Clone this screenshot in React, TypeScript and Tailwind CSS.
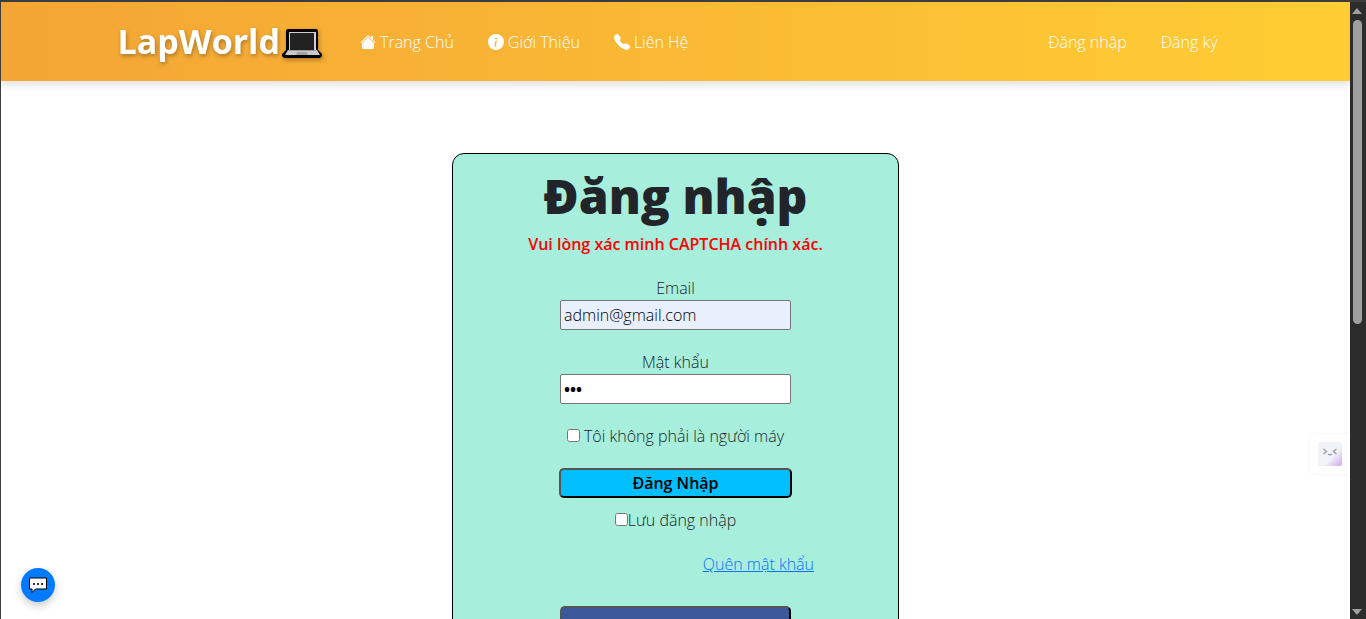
import { BsFillTelephoneFill, BsHouseFill, BsInfoCircleFill } from "react-icons/bs";
import type { ReactNode } from "react";

function LaptopIcon() {
  return (
    <svg viewBox="0 0 40 32" className="mt-1 h-8 w-10 shrink-0" aria-hidden="true">
      <path d="M6 1h28q2 0 2 2v19l4 4v2l-2 2H2l-2-2v-2l4-4V3q0-2 2-2z" fill="#000" />
      <path d="M7 4h27v18H7z" fill="#cfcfcf" />
      <path d="M8 5h24v17H8z" fill="#212121" />
      <path d="M6 22h29l3 5H3z" fill="#c9c9c9" />
      <path d="M7 22h27v1H7z" fill="#9b9b9b" />
      <path d="M15 24h10l1 3H14z" fill="#a3a3a3" />
    </svg>
  );
}

function ChatIcon() {
  return (
    <svg viewBox="0 0 18 16" className="h-4 w-[18px]" aria-hidden="true">
      <path d="M.5 1h17v11H6.5L3 15.5V12H.5z" fill="#fff" stroke="#000" />
      <path d="M4 6h2v2H4zM8 6h2v2H8zM12 6h2v2h-2z" fill="#333" />
    </svg>
  );
}

function NavLink({ icon, children }: { icon?: ReactNode; children: ReactNode }) {
  return (
    <a href="#" className="flex items-center gap-1 px-2 py-2 text-base font-light text-white">
      {icon}
      {children}
    </a>
  );
}

function Header() {
  return (
    <header className="relative bg-linear-to-r from-[#f4a535] to-[#ffcd33] shadow-[0_4px_8px_rgba(0,0,0,0.12)]">
      <nav className="mx-auto flex h-[79px] max-w-[1140px] items-center px-3">
        <a
          href="#"
          className="mr-[30px] flex items-center gap-0.5 font-['Open_Sans',sans-serif] text-[34px] font-bold text-white drop-shadow-[1px_2px_2px_rgba(0,0,0,0.3)]"
        >
          LapWorld
          <LaptopIcon />
        </a>
        <div className="flex items-center gap-[18px]">
          <NavLink icon={<BsHouseFill className="size-4" />}>Trang Chủ</NavLink>
          <NavLink icon={<BsInfoCircleFill className="size-4" />}>Giới Thiệu</NavLink>
          <NavLink icon={<BsFillTelephoneFill className="size-4" />}>Liên Hệ</NavLink>
        </div>
        <div className="mr-2 ml-auto flex items-center gap-[18px]">
          <NavLink>Đăng nhập</NavLink>
          <NavLink>Đăng ký</NavLink>
        </div>
      </nav>
    </header>
  );
}

const fieldClass =
  "h-[30px] w-full rounded-xs border border-[#767676] px-[3px] text-base text-black outline-none";

function LoginCard() {
  return (
    <form className="mx-auto mt-18 flex w-full max-w-[447px] flex-col items-center rounded-xl border border-black bg-[#a7eedc] pt-4 pb-10 font-light text-[#212529]">
      <h1 className="text-5xl leading-[52px] font-extrabold">Đăng nhập</h1>
      <p className="mt-2.5 mb-5 font-semibold text-[#ff0000]">Vui lòng xác minh CAPTCHA chính xác.</p>
      <div className="mb-5 w-[231px] text-center">
        <label htmlFor="email" className="block">Email</label>
        <input id="email" type="email" defaultValue="admin@gmail.com" className={`${fieldClass} bg-[#e8f0fe]`} />
      </div>
      <div className="mb-5 w-[231px] text-center">
        <label htmlFor="password" className="block">Mật khẩu</label>
        <input id="password" type="password" defaultValue="123" className={`${fieldClass} bg-white font-bold`} />
      </div>
      <label className="mb-5 flex items-center gap-1">
        <input type="checkbox" className="mb-0.5 size-[13px]" />
        Tôi không phải là người máy
      </label>
      <button
        type="submit"
        className="mb-2.5 flex h-[30px] w-[233px] items-center justify-center rounded-[5px] border-2 border-t-[#555] border-r-black border-b-black border-l-[#555] bg-[#00bfff] font-semibold text-black"
      >
        Đăng Nhập
      </button>
      <label className="mb-5 flex items-center">
        <input type="checkbox" className="mb-0.5 size-[13px]" />
        Lưu đăng nhập
      </label>
      <a href="#" className="mr-[84px] mb-[30px] self-end text-[#0d6efd] underline">Quên mật khẩu</a>
      <button
        type="button"
        aria-label="Facebook"
        className="h-[30px] w-[231px] rounded-[5px] border-2 border-t-[#555] border-r-black border-b-black border-l-[#555] bg-[#3b5998]"
      />
    </form>
  );
}

function ScrollRail() {
  return (
    <div className="flex w-4 shrink-0 flex-col items-center bg-[#2c2c2c] pt-1.5 pr-0.5 pb-1" aria-hidden="true">
      <svg viewBox="0 0 10 6" className="h-1.5 w-2.5"><path d="M5 0l5 6H0z" fill="#a0a0a0" /></svg>
      <div className="mt-1.5 h-1/2 w-[9px] rounded-full bg-[#9f9f9f]" />
      <svg viewBox="0 0 10 6" className="mt-auto h-1.5 w-2.5"><path d="M0 0h10L5 6z" fill="#a0a0a0" /></svg>
    </div>
  );
}

export default function App() {
  return (
    <div className="flex h-screen overflow-hidden border-t-2 border-l border-[#3c3c3c] bg-white font-['Open_Sans',sans-serif] text-base">
      <main className="min-w-0 flex-1 overflow-hidden">
        <Header />
        <LoginCard />
      </main>
      <ScrollRail />
      <button
        type="button"
        aria-label="Chat"
        className="fixed bottom-[17px] left-[21px] flex size-[34px] items-center justify-center rounded-full bg-[#007bff] shadow-[0_4px_8px_rgba(0,0,0,0.2)]"
      >
        <ChatIcon />
      </button>
      <div className="fixed right-4 bottom-[145px] flex h-10 w-10 items-center rounded-l-md bg-white pl-2 shadow-[0_0_3px_rgba(0,0,0,0.08)] [clip-path:inset(-4px_0_-4px_-4px)]">
        <div className="flex size-6 items-center justify-center rounded-xs bg-linear-to-br from-[#f0f4f8] from-60% to-[#cfa5ef]">
          <svg viewBox="0 0 14 8" className="mb-1 h-2 w-3.5" fill="none" stroke="#9a9ea8" strokeWidth="1.5" aria-hidden="true">
            <path d="M.5 1L3.5 3.5.5 6M13.5 1l-3 2.5 3 2.5M5 6q2 1.5 4 0" />
          </svg>
        </div>
      </div>
    </div>
  );
}
